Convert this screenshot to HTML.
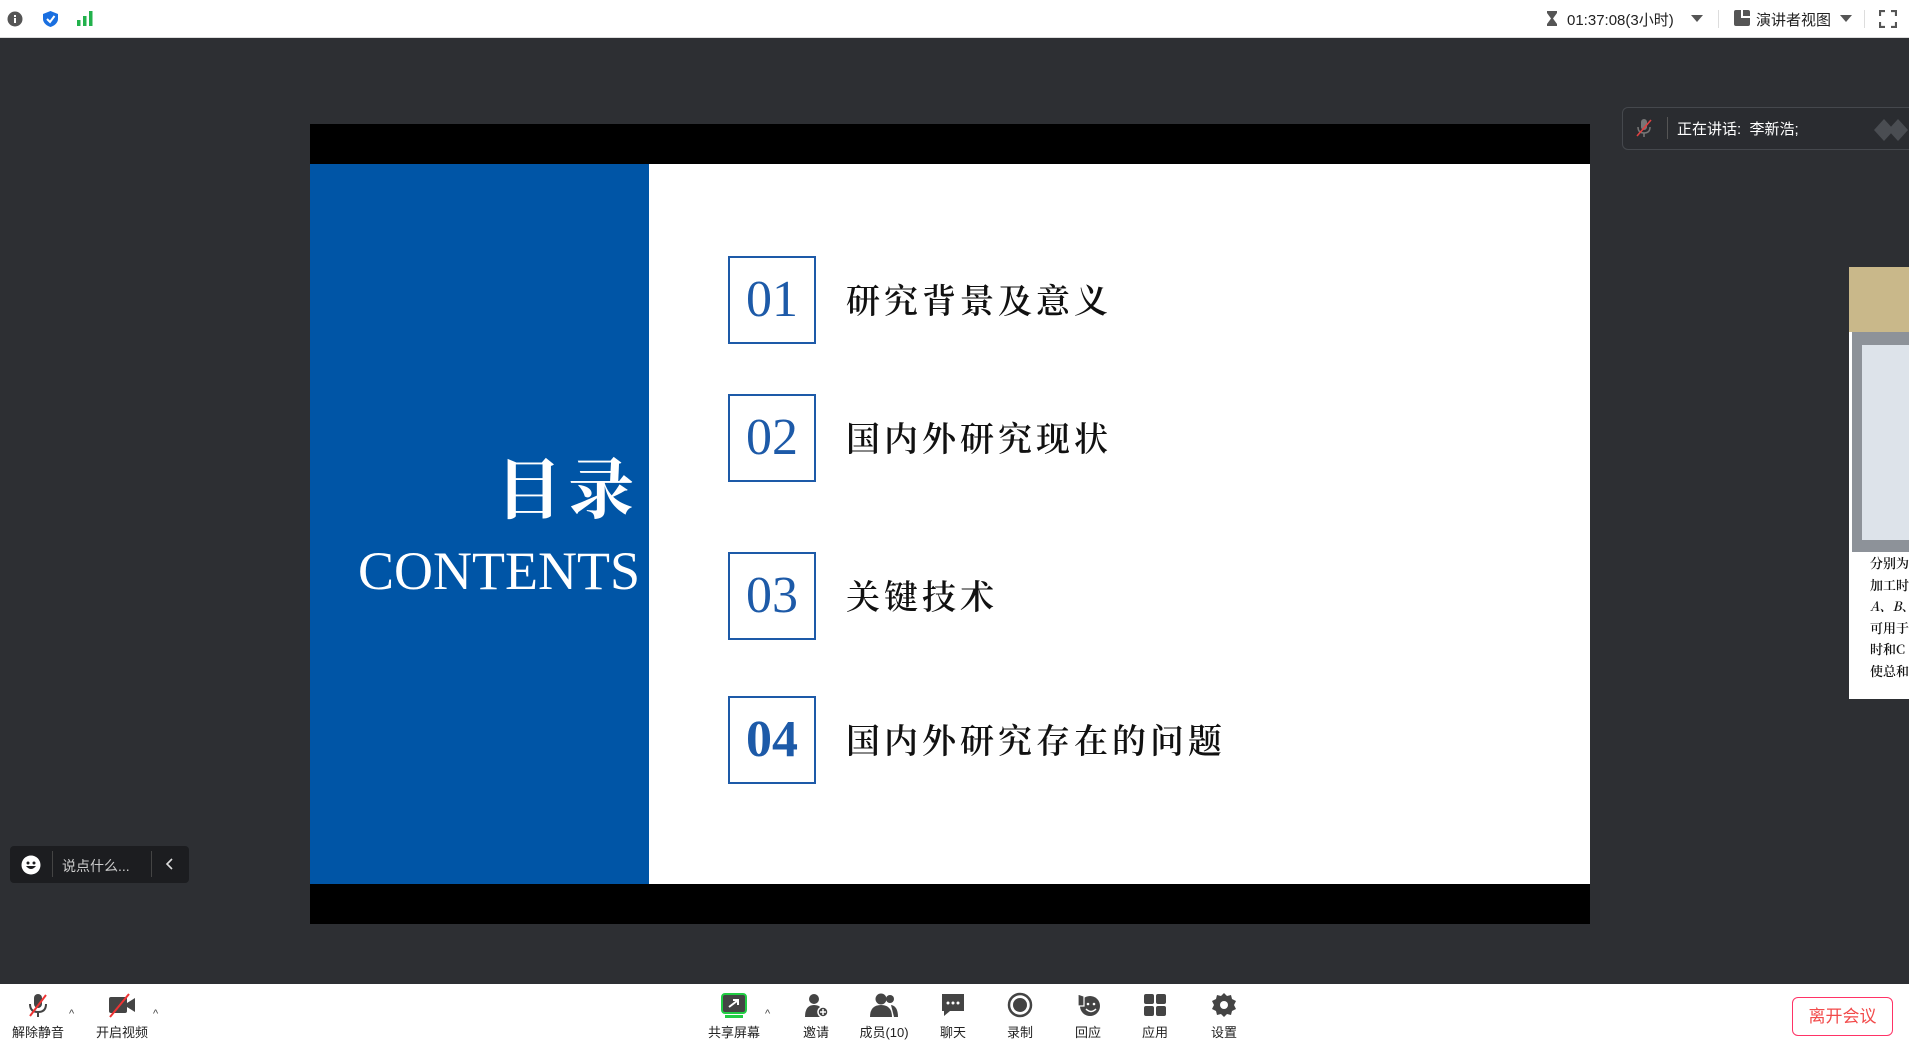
<!DOCTYPE html>
<html><head><meta charset="utf-8"><style>
*{margin:0;padding:0;box-sizing:border-box}
body{width:1909px;height:1049px;background:#2d2f33;position:relative;overflow:hidden;font-family:"Liberation Sans","Noto Sans CJK SC",sans-serif}
.abs{position:absolute}
#top{left:0;top:0;width:1909px;height:38px;background:#fff;border-bottom:1px solid #ddd}
#bot{left:0;top:984px;width:1909px;height:65px;background:#fff}
.tb{position:absolute;top:992px;width:70px;margin-left:-35px;text-align:center;font-size:13px;color:#222}
.tb svg{display:block;margin:0 auto 4px}
.box{position:absolute;left:728px;width:88px;height:88px;border:2px solid #1d5aa8;color:#1d5aa8;font-family:"Liberation Serif",serif;font-size:52px;text-align:center;line-height:84px}
.it{position:absolute;left:846px;font-family:"Noto Serif CJK SC",serif;font-size:34px;color:#111;letter-spacing:4px;font-weight:600}
</style></head><body>
<div id="top" class="abs">
 <svg class="abs" style="left:7px;top:11px" width="16" height="16"><circle cx="8" cy="8" r="7.5" fill="#555"/><rect x="7" y="7" width="2" height="5" fill="#fff"/><rect x="7" y="4" width="2" height="2" fill="#fff"/></svg>
 <svg class="abs" style="left:42px;top:10px" width="17" height="18"><path d="M8.5 1 L16 4 V9 C16 13 12 16 8.5 17 C5 16 1 13 1 9 V4Z" fill="#1a6fe0"/><path d="M5 9 L8 12 L12.5 6" stroke="#fff" stroke-width="2" fill="none"/></svg>
 <svg class="abs" style="left:77px;top:11px" width="16" height="15"><rect x="0" y="9" width="3.5" height="6" fill="#22b14c"/><rect x="6" y="5" width="3.5" height="10" fill="#22b14c"/><rect x="12" y="0" width="3.5" height="15" fill="#22b14c"/></svg>
 <svg class="abs" style="left:1546px;top:10px" width="12" height="17"><path d="M1 1H11V3L7 8.5L11 14V16H1V14L5 8.5L1 3Z" fill="#555"/></svg>
 <div class="abs" style="left:1567px;top:9px;font-size:15px;color:#222">01:37:08(3小时)</div>
 <svg class="abs" style="left:1691px;top:15px" width="12" height="7"><path d="M0 0H12L6 7Z" fill="#555"/></svg>
 <div class="abs" style="left:1718px;top:10px;width:1px;height:18px;background:#ddd"></div>
 <svg class="abs" style="left:1734px;top:10px" width="16" height="16"><path d="M0 2Q0 0 2 0H7V8H16V14Q16 16 14 16H2Q0 16 0 14Z M9 0H14Q16 0 16 2V6H9Z" fill="#555"/></svg>
 <div class="abs" style="left:1756px;top:9px;font-size:15px;color:#222">演讲者视图</div>
 <svg class="abs" style="left:1840px;top:15px" width="12" height="7"><path d="M0 0H12L6 7Z" fill="#555"/></svg>
 <div class="abs" style="left:1864px;top:10px;width:1px;height:18px;background:#ddd"></div>
 <svg class="abs" style="left:1879px;top:10px" width="18" height="18" fill="none" stroke="#555" stroke-width="2.2"><path d="M1 6V1H6M12 1H17V6M17 12V17H12M6 17H1V12"/></svg>
</div>

<div class="abs" style="left:310px;top:124px;width:1280px;height:800px;background:#000"></div>
<div class="abs" style="left:310px;top:164px;width:1280px;height:720px;background:#fff"></div>
<div class="abs" style="left:310px;top:164px;width:339px;height:720px;background:#0055a6"></div>
<div class="abs" style="left:310px;top:440px;width:330px;text-align:right;font-family:'Noto Serif CJK SC',serif;font-size:66px;color:#fff;font-weight:700;letter-spacing:6px;line-height:90px">目录</div>
<div class="abs" style="left:300px;top:540px;width:340px;text-align:right;font-family:'Liberation Serif',serif;font-size:54px;color:#fff;line-height:62px">CONTENTS</div>
<div class="box" style="top:256px">01</div>
<div class="box" style="top:394px">02</div>
<div class="box" style="top:552px">03</div>
<div class="box" style="top:696px;font-weight:bold">04</div>
<div class="it" style="top:274px">研究背景及意义</div>
<div class="it" style="top:412px">国内外研究现状</div>
<div class="it" style="top:570px">关键技术</div>
<div class="it" style="top:714px">国内外研究存在的问题</div>

<div class="abs" style="left:1622px;top:107px;width:300px;height:43px;border:1px solid #45484d;border-radius:6px;background:#2a2c30"></div>
<svg class="abs" style="left:1636px;top:118px" width="16" height="20"><rect x="5" y="1" width="6" height="11" rx="3" fill="#777"/><path d="M2 9Q2 15 8 15Q14 15 14 9M8 15V19" stroke="#777" fill="none" stroke-width="1.5"/><path d="M1 18L15 2" stroke="#e04040" stroke-width="1.6"/></svg>
<div class="abs" style="left:1667px;top:117px;width:1px;height:22px;background:#555"></div>
<div class="abs" style="left:1677px;top:118px;font-size:15px;color:#fff">正在讲话:&nbsp; 李新浩;</div>
<svg class="abs" style="left:1874px;top:115px" width="35" height="30"><path d="M0 15L10 4L20 15L10 26Z M14 15L24 4L34 15L24 26Z" fill="#4a4d52"/></svg>

<div class="abs" style="left:1849px;top:267px;width:60px;height:432px;background:#fff"></div>
<div class="abs" style="left:1849px;top:267px;width:60px;height:65px;background:#c9b88a"></div>
<div class="abs" style="left:1852px;top:332px;width:57px;height:220px;background:#8d9299"></div>
<div class="abs" style="left:1862px;top:345px;width:47px;height:195px;background:#dde3ea"></div>
<div class="abs" style="left:1870px;top:552px;width:60px;white-space:nowrap;font-family:'Noto Serif CJK SC',serif;font-size:13px;line-height:21.5px;color:#111;font-weight:600">分别为<br>加工时<br><i>A、B</i>、<br>可用于<br>时和C<br>使总和</div>

<div class="abs" style="left:10px;top:846px;width:179px;height:37px;background:#1c1d20;border-radius:4px"></div>
<svg class="abs" style="left:21px;top:855px" width="20" height="20"><circle cx="10" cy="10" r="9.5" fill="#fff"/><circle cx="7" cy="8" r="1.5" fill="#1c1d20"/><circle cx="13" cy="8" r="1.5" fill="#1c1d20"/><path d="M5 11Q10 17 15 11Z" fill="#1c1d20"/></svg>
<div class="abs" style="left:52px;top:851px;width:1px;height:26px;background:#444"></div>
<div class="abs" style="left:62px;top:856px;font-size:14px;color:#ccc">说点什么...</div>
<div class="abs" style="left:151px;top:851px;width:1px;height:26px;background:#444"></div>
<svg class="abs" style="left:165px;top:858px" width="8" height="12"><path d="M7 1L2 6L7 11" stroke="#ddd" stroke-width="1.6" fill="none"/></svg>

<div id="bot" class="abs"></div>
<div class="tb" style="left:38px"><svg width="26" height="26"><rect x="9" y="2" width="8" height="14" rx="4" fill="#444"/><path d="M5 12Q5 20 13 20Q21 20 21 12M13 20V25" stroke="#444" fill="none" stroke-width="2"/><path d="M5 24L21 3" stroke="#e33" stroke-width="2"/></svg>解除静音</div>
<div class="abs" style="left:69px;top:1008px;font-size:11px;color:#444">^</div>
<div class="tb" style="left:122px"><svg width="30" height="26"><rect x="2" y="5" width="18" height="16" rx="2" fill="#444"/><path d="M20 11L28 6V20L20 15Z" fill="#444"/><path d="M3 25L22 2" stroke="#e33" stroke-width="2"/></svg>开启视频</div>
<div class="abs" style="left:153px;top:1008px;font-size:11px;color:#444">^</div>
<div class="tb" style="left:734px"><svg width="28" height="26"><rect x="2" y="2" width="24" height="19" rx="3" fill="#444" stroke="#2c4" stroke-width="2"/><path d="M9 15L17 9M13 8H18V13" stroke="#fff" stroke-width="2" fill="none"/><rect x="5" y="23" width="18" height="3" fill="#2c4"/></svg>共享屏幕</div>
<div class="abs" style="left:765px;top:1008px;font-size:11px;color:#444">^</div>
<div class="tb" style="left:816px"><svg width="26" height="26"><circle cx="11" cy="7" r="5" fill="#444"/><path d="M2 25Q2 13 11 13Q16 13 18 16V25Z" fill="#444"/><circle cx="20" cy="20" r="5" fill="#444" stroke="#fff" stroke-width="1.5"/><path d="M17 20H23M20 17V23" stroke="#fff" stroke-width="1.5"/></svg>邀请</div>
<div class="tb" style="left:884px"><svg width="30" height="26"><circle cx="12" cy="7" r="5.5" fill="#444"/><path d="M1 25Q1 13 12 13Q23 13 23 25Z" fill="#444"/><circle cx="21" cy="7" r="4" fill="#444"/><path d="M22 13Q29 14 29 25H25Z" fill="#444"/></svg>成员(10)</div>
<div class="tb" style="left:953px"><svg width="26" height="26"><path d="M2 2H24V19H10L4 24V19H2Z" fill="#444"/><circle cx="8" cy="11" r="1.5" fill="#fff"/><circle cx="13" cy="11" r="1.5" fill="#fff"/><circle cx="18" cy="11" r="1.5" fill="#fff"/></svg>聊天</div>
<div class="tb" style="left:1020px"><svg width="26" height="26"><circle cx="13" cy="13" r="11" fill="none" stroke="#444" stroke-width="2.5"/><circle cx="13" cy="13" r="7" fill="#444"/></svg>录制</div>
<div class="tb" style="left:1088px"><svg width="28" height="26"><circle cx="16" cy="14" r="10" fill="#444"/><path d="M4 2V14H10V4Z" fill="#444" stroke="#fff" stroke-width="1.2"/><circle cx="14" cy="12" r="1.3" fill="#fff"/><circle cx="20" cy="12" r="1.3" fill="#fff"/><path d="M12 17Q17 22 22 17" stroke="#fff" stroke-width="1.5" fill="none"/></svg>回应</div>
<div class="tb" style="left:1155px"><svg width="26" height="26"><rect x="2" y="2" width="10" height="10" rx="2" fill="#444"/><rect x="14" y="2" width="10" height="10" rx="2" fill="#444"/><rect x="2" y="14" width="10" height="10" rx="2" fill="#444"/><rect x="14" y="14" width="10" height="10" rx="2" fill="#444"/></svg>应用</div>
<div class="tb" style="left:1224px"><svg width="26" height="26"><path d="M13 1L16 4L20 3L21 7L25 9L23 13L25 17L21 19L20 23L16 22L13 25L10 22L6 23L5 19L1 17L3 13L1 9L5 7L6 3L10 4Z" fill="#444"/><circle cx="13" cy="13" r="4" fill="#fff"/></svg>设置</div>
<div class="abs" style="left:1792px;top:997px;width:101px;height:39px;border:1px solid #f36;border-radius:6px;color:#f24a4a;font-size:17px;text-align:center;line-height:37px">离开会议</div>
</body></html>
